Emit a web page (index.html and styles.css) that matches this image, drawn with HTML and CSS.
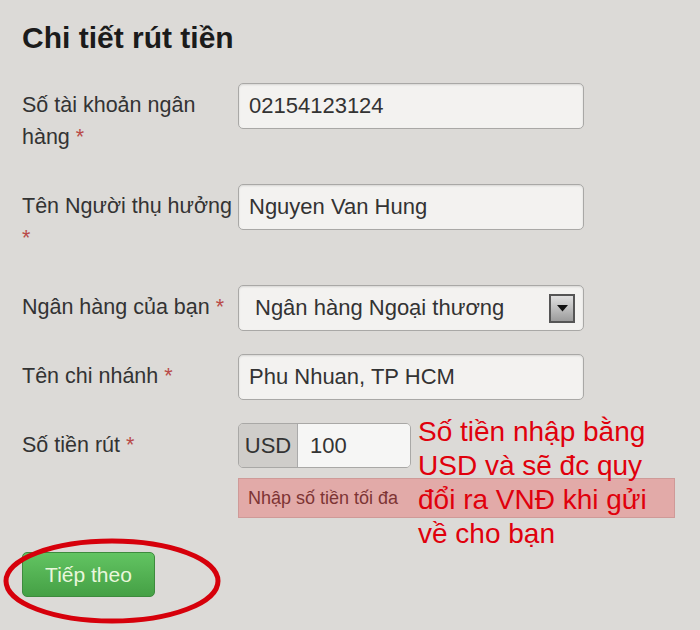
FILE: index.html
```html
<!DOCTYPE html>
<html lang="vi">
<head>
  <meta charset="UTF-8">
  <meta name="viewport" content="width=device-width, initial-scale=1.0">
  <title>Chi tiết rút tiền</title>
  <link rel="stylesheet" href="styles.css">
</head>
<body>

  <h1 class="title">Chi tiết rút tiền</h1>

  <form class="withdraw-form">
    <div class="row">
      <label class="label">Số tài khoản ngân hàng <span class="req">*</span></label>
      <div class="control">
        <div class="field">02154123124</div>
      </div>
    </div>

    <div class="row">
      <label class="label">Tên Người thụ hưởng <span class="req">*</span></label>
      <div class="control">
        <div class="field">Nguyen Van Hung</div>
      </div>
    </div>

    <div class="row">
      <label class="label">Ngân hàng của bạn <span class="req">*</span></label>
      <div class="control">
        <div class="field select">
          <span class="select-text">Ngân hàng Ngoại thương</span>
          <span class="select-btn">
            <svg width="11" height="7" viewBox="0 0 11 7"><path d="M0 0 H11 L5.5 6.5 Z" fill="#111"/></svg>
          </span>
        </div>
      </div>
    </div>

    <div class="row">
      <label class="label">Tên chi nhánh <span class="req">*</span></label>
      <div class="control">
        <div class="field">Phu Nhuan, TP HCM</div>
      </div>
    </div>

    <div class="row">
      <label class="label">Số tiền rút <span class="req">*</span></label>
      <div class="control">
        <div class="input-group">
          <span class="addon">USD</span>
          <span class="amount">100</span>
        </div>
        <div class="help">Nhập số tiền tối đa</div>
      </div>
    </div>

    <div class="actions">
      <button type="button" class="btn-next">Tiếp theo</button>
    </div>

    <!-- annotation drawn on top of the screenshot -->
    <div class="note">Số tiền nhập bằng<br>USD và sẽ đc quy<br>đổi ra VNĐ khi gửi<br>về cho bạn</div>
    <svg class="circle" width="220" height="90" viewBox="0 0 220 90">
      <ellipse cx="110" cy="44" rx="106" ry="40" fill="none" stroke="#d6000b" stroke-width="5"/>
    </svg>
  </form>

</body>
</html>
```

FILE: styles.css
```css
/* withdraw form */
body {
  box-sizing: border-box;
  min-height: 630px;
  margin: 0;
  padding: 0 0 0 22px;
  background-color: #dcdad7;
  font-family: "Liberation Sans", Arial, sans-serif;
  color: #333;
}

.title {
  margin: 0;
  padding-top: 20px;
  font-size: 30px;
  line-height: 36px;
  font-weight: bold;
  color: #1b1b1b;
}

.withdraw-form {
  position: relative;
  margin-top: 27px;
  min-height: 547px;
}

.row {
  display: flex;
  margin-bottom: 23px;
}

.label {
  width: 216px;
  padding: 6px 0 8px;
  font-size: 21.5px;
  line-height: 32px;
  color: #333;
}

.req {
  color: #b94a48;
}

.control {
  width: 346px;
}

.field {
  box-sizing: border-box;
  height: 46px;
  padding: 0 10px;
  border: 1px solid #a9a8a6;
  border-radius: 5px;
  background-color: #f3f2f0;
  box-shadow: inset 0 1px 2px rgba(0, 0, 0, 0.12);
  font-size: 22px;
  line-height: 44px;
  color: #333;
}

.select {
  display: flex;
  align-items: center;
  padding: 0 8px 0 16px;
}

.select-text {
  flex: 1;
}

.select-btn {
  box-sizing: border-box;
  width: 26px;
  height: 29px;
  display: flex;
  align-items: center;
  justify-content: center;
  border: 2px solid #555;
  background: linear-gradient(#e0e0e0, #9c9c9c);
}

.input-group {
  display: flex;
  width: 173px;
  height: 45px;
  box-sizing: border-box;
  border: 1px solid #a9a8a6;
  border-radius: 5px;
  overflow: hidden;
  font-size: 22px;
  line-height: 43px;
}

.addon {
  width: 58px;
  text-align: center;
  background-color: #cfcdca;
  border-right: 1px solid #aaa;
  color: #333;
}

.amount {
  flex: 1;
  padding-left: 12px;
  background-color: #f6f6f5;
  color: #333;
}

.help {
  box-sizing: border-box;
  width: 437px;
  height: 40px;
  margin-top: 10px;
  padding-left: 9px;
  border: 1px solid #cf9a98;
  background-color: #e2aaa8;
  color: #7d3434;
  font-size: 18px;
  line-height: 38px;
}

.actions {
  padding-top: 11px;
}

.btn-next {
  width: 133px;
  height: 45px;
  border: 1px solid #3d8b3d;
  border-radius: 5px;
  background: linear-gradient(#62c462, #45a045);
  color: #e9f7dc;
  font-family: "Liberation Sans", Arial, sans-serif;
  font-size: 21px;
  cursor: pointer;
}

.note {
  position: absolute;
  left: 396px;
  top: 332px;
  font-size: 28px;
  line-height: 34px;
  color: #e0000c;
}

.circle {
  position: absolute;
  left: -20px;
  top: 454px;
}
```
